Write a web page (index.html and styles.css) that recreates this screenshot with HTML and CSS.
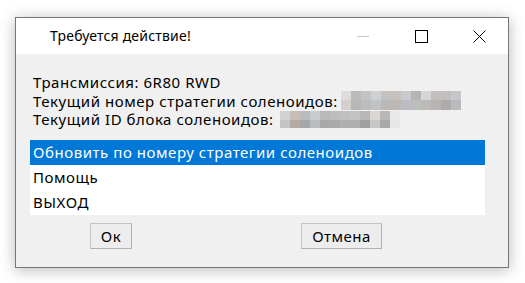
FILE: index.html
```html
<!DOCTYPE html>
<html lang="ru">
<head>
<meta charset="utf-8">
<link rel="stylesheet" href="styles.css">
</head>
<body>
<div class="window">
  <div class="titlebar">
    <div class="title">Требуется действие!</div>
    <div class="controls">
      <div class="ctl"><span class="min"></span></div>
      <div class="ctl"><span class="max"></span></div>
      <div class="ctl">
        <svg width="13" height="13" viewBox="0 0 13 13"><path d="M0.5 0.5 L12.5 12.5 M12.5 0.5 L0.5 12.5" stroke="#000" stroke-width="1" fill="none"/></svg>
      </div>
    </div>
  </div>
  <div class="body">
    <div class="info">
      <div class="line">Трансмиссия: 6R80 RWD</div>
      <div class="line">Текущий номер стратегии соленоидов:<span class="blur blur-a"></span></div>
      <div class="line">Текущий ID блока соленоидов:<span class="blur blur-b"></span></div>
    </div>
    <div class="list">
      <div class="item selected">Обновить по номеру стратегии соленоидов</div>
      <div class="item">Помощь</div>
      <div class="item">ВЫХОД</div>
    </div>
    <div class="buttons">
      <button class="btn btn-ok">Ок</button>
      <button class="btn btn-cancel">Отмена</button>
    </div>
  </div>
</div>
</body>
</html>
```
FILE: styles.css
```css
html, body {
  margin: 0;
  padding: 0;
  background: #ffffff;
}
body {
  width: 525px;
  height: 283px;
  overflow: hidden;
  font-family: "Noto Sans", "Open Sans", sans-serif;
  color: #000;
}
.window {
  box-sizing: border-box;
  margin: 17px 0 0 15px;
  width: 494px;
  height: 251px;
  border: 1px solid #767676;
  background: #f0f0f0;
  box-shadow: 0 2px 14px rgba(0, 0, 0, 0.28);
  display: flex;
  flex-direction: column;
}
.titlebar {
  height: 36px;
  background: #fff;
  display: flex;
  align-items: center;
}
.title {
  padding-left: 34px;
  font-size: 14px;
  letter-spacing: 0.2px;
  flex: 1;
  margin-top: -1px;
}
.controls {
  display: flex;
  height: 100%;
}
.ctl {
  width: 58px;
  height: 100%;
  display: flex;
  align-items: center;
  justify-content: center;
}
.min {
  display: block;
  width: 12px;
  height: 1px;
  background: #c8c8c8;
}
.max {
  display: block;
  box-sizing: border-box;
  width: 13px;
  height: 13px;
  border: 1px solid #000;
}
.body {
  flex: 1;
  padding: 0 22px 0 14px;
  display: flex;
  flex-direction: column;
}
.info {
  padding: 19px 0 0 3px;
  font-size: 15px;
  letter-spacing: 0.55px;
  line-height: 18.5px;
}
.line {
  display: flex;
  align-items: center;
  white-space: nowrap;
  height: 18.5px;
}
.blur {
  display: inline-block;
  flex: none;
  height: 19px;
  margin-left: 3px;
}
.blur-a {
  width: 120px;
  background:
    linear-gradient(to right,
      #e0dcd9 0 10px, #bcbbbb 10px 20px, #c3c3c3 20px 30px, #ced1d3 30px 40px,
      #c3c2c2 40px 50px, #c6c1bd 50px 60px, #c8cacd 60px 70px, #b5b4b4 70px 80px,
      #d5d6d7 80px 90px, #c2bfbe 90px 100px, #c2c0bf 100px 110px, #c5c8ca 110px 120px) top / 100% 9px no-repeat,
    linear-gradient(to right,
      #d3cfcc 0 10px, #b8b7b7 10px 20px, #bbbcbd 20px 30px, #c0c4c7 30px 40px,
      #bbb9b8 40px 50px, #bdb8b4 50px 60px, #b9bdc1 60px 70px, #bcbebe 70px 80px,
      #bdb9b7 80px 90px, #b7b5b4 90px 100px, #aeabaa 100px 110px, #b8bbbd 110px 120px) bottom / 100% 10px no-repeat;
}
.blur-b {
  width: 120px;
  height: 17px;
  margin-left: 6px;
  background:
    linear-gradient(to right,
      #d3d3d3 0 10px, #c9bdb8 10px 20px, #bcbcbc 20px 30px, #c9ccce 30px 40px,
      #b9b9b9 40px 50px, #bdbdbd 50px 60px, #c0c0c0 60px 70px, #c3c3c3 70px 80px,
      #b8b8b8 80px 90px, #d9d6d3 90px 100px, #b7b7b7 100px 110px, #e9e9eb 110px 120px) top / 100% 9px no-repeat,
    linear-gradient(to right,
      #c5c5c5 0 10px, #b6aaa5 10px 20px, #a7a7a7 20px 30px, #b8bcbf 30px 40px,
      #a9a9a9 40px 50px, #aaaaaa 50px 60px, #b0b0b0 60px 70px, #afafaf 70px 80px,
      #a0a0a0 80px 90px, #c7c7c7 90px 100px, #a8a8a8 100px 110px, #e7e7ea 110px 120px) bottom / 100% 8px no-repeat;
}
.list {
  margin-top: 11px;
  background: #fff;
  width: 455px;
}
.item {
  height: 25px;
  line-height: 25px;
  padding-left: 3px;
  font-size: 15px;
  letter-spacing: 0.55px;
  white-space: nowrap;
}
.item.selected {
  background: #0078d7;
  color: #fff;
}
.buttons {
  display: flex;
  margin-top: 8px;
  padding-left: 60px;
}
.btn {
  box-sizing: border-box;
  height: 26px;
  margin: 0;
  padding: 0;
  border: 1px solid #c4c4c4;
  border-right-color: #b0b0b0;
  border-bottom-color: #b0b0b0;
  background: #ededed;
  font-family: inherit;
  font-size: 15px;
  letter-spacing: 0.5px;
  color: #000;
  line-height: 24px;
}
.btn-ok {
  width: 42px;
}
.btn-cancel {
  width: 81px;
  margin-left: 169px;
}
```
